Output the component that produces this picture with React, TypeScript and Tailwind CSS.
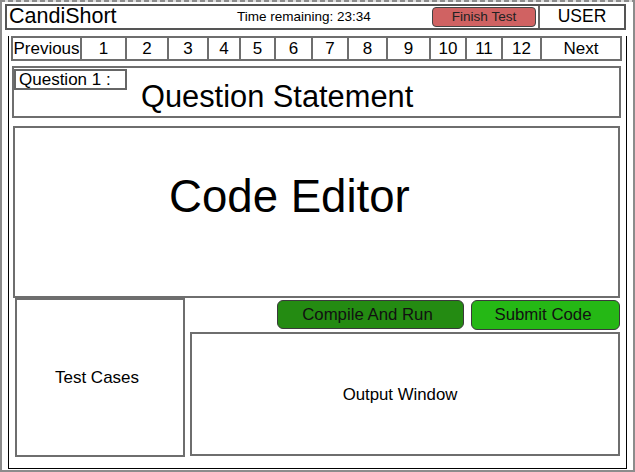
import React from "react";

const pages = [
  { label: "Previous", w: "w-[69px]" },
  { label: "1", w: "w-[45px]" },
  { label: "2", w: "w-[42px]" },
  { label: "3", w: "w-[40px]" },
  { label: "4", w: "w-[32px]" },
  { label: "5", w: "w-[35px]" },
  { label: "6", w: "w-[37px]" },
  { label: "7", w: "w-[36px]" },
  { label: "8", w: "w-[39px]" },
  { label: "9", w: "w-[43px]" },
  { label: "10", w: "w-[36px]" },
  { label: "11", w: "w-[36px]" },
  { label: "12", w: "w-[39px]" },
];

export default function App() {
  return (
    <div className="w-[635px] h-[472px] bg-white font-['Liberation_Sans',Arial,sans-serif] text-black overflow-hidden flex flex-col">
      {/* dashed top edge */}
      <div className="h-[2px] shrink-0 bg-[repeating-linear-gradient(90deg,#8c8c8c_0_5px,#dcdcdc_5px_8px)]" />
      <div className="flex-1 border-x-2 border-b-2 border-[#8c8c8c]">
        {/* Header */}
        <div className="ml-[3px] mt-[2px] w-[621px] h-[26px] border-2 border-[#555] flex items-center">
          <span className="w-[230px] pl-[2px] text-[21.5px] leading-none">CandiShort</span>
          <span className="w-[195px] text-[13.5px] leading-none">Time remaining: 23:34</span>
          <button className="w-[104px] h-[20px] rounded-[4px] bg-[#d06262] border border-[#444] text-[13.6px] leading-none text-[#222]">
            Finish Test
          </button>
          <div className="ml-[2px] h-full border-l-2 border-[#666]" />
          <span className="flex-1 text-center text-[17.5px] leading-none">USER</span>
        </div>

        {/* Body frame */}
        <div className="ml-[6px] w-[619px] h-[433px] border-x border-b border-black">
          {/* Question navigation */}
          <div className="mt-[6px] ml-[2px] w-[611px] h-[25px] border-2 border-[#6e6e6e] flex">
            {pages.map((p) => (
              <div
                key={p.label}
                className={`${p.w} h-full border-r-2 border-[#6e6e6e] flex items-center justify-center text-[17px] leading-none`}
              >
                {p.label}
              </div>
            ))}
            <div className="flex-1 h-full flex items-center justify-center text-[17px] leading-none">Next</div>
          </div>

          {/* Question statement */}
          <div className="mt-[5px] ml-[3px] w-[609px] h-[52px] border-2 border-[#6e6e6e] flex items-start">
            <div className="mt-[1px] w-[113px] h-[21px] border-2 border-[#666] flex items-center pl-[3px] text-[17px] leading-none">
              Question 1 :
            </div>
            <div className="mt-[14px] ml-[14px] text-[30.8px] leading-none whitespace-nowrap">Question Statement</div>
          </div>

          {/* Code editor */}
          <div className="mt-[8px] ml-[4px] w-[607px] h-[172px] border-2 border-[#6e6e6e]">
            <div className="mt-[46px] ml-[154px] text-[45.6px] leading-none whitespace-nowrap">Code Editor</div>
          </div>

          {/* Test cases + output */}
          <div className="flex">
            <div className="ml-[6px] w-[170px] h-[159px] border-2 border-[#6e6e6e] flex items-center justify-center pr-[6px] text-[17px] leading-none">
              Test Cases
            </div>
            <div className="ml-[5px] w-[430px] flex flex-col">
              <div className="mt-[2px] flex justify-end gap-[7px]">
                <button className="w-[187px] h-[29px] rounded-[6px] bg-[#248b12] border border-[#3a3a3a] pr-[6px] pt-[1px] text-[16.8px] leading-none text-[#111]">
                  Compile And Run
                </button>
                <button className="w-[149px] h-[30px] rounded-[6px] bg-[#25b815] border border-[#3a3a3a] pr-[5px] text-[16.8px] leading-none text-[#111]">
                  Submit Code
                </button>
              </div>
              <div className="mt-[2px] h-[124px] border-2 border-[#6e6e6e] flex items-center justify-center pr-[10px] pt-[2px] text-[16.8px] leading-none">
                Output Window
              </div>
            </div>
          </div>
        </div>
      </div>
    </div>
  );
}
